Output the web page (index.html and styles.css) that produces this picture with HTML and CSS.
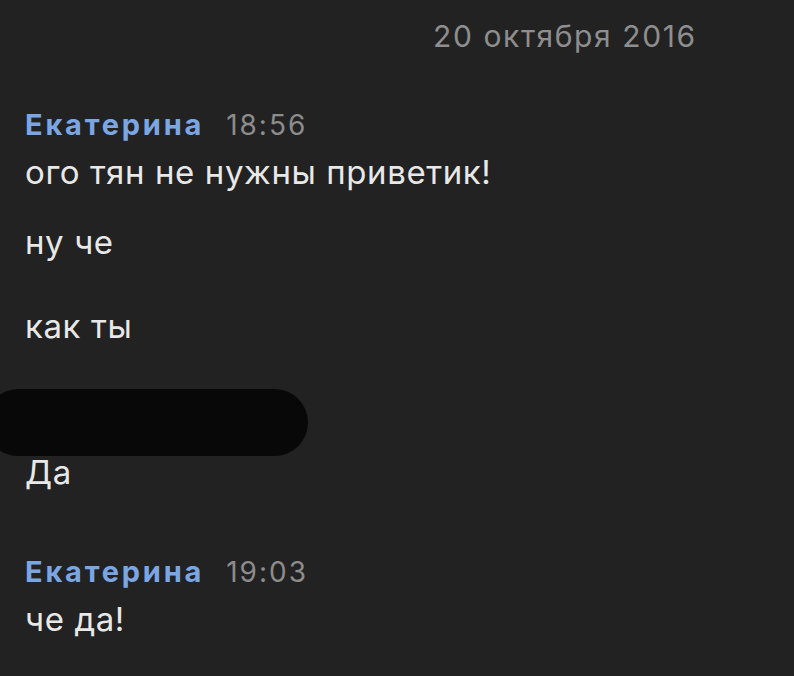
FILE: index.html
```html
<!DOCTYPE html>
<html lang="ru">
  <head>
    <meta charset="utf-8">
    <meta name="viewport" content="width=device-width, initial-scale=1.0">
    <title>Сообщения</title>
    <link rel="stylesheet" href="styles.css">
  </head>
  <body>
    <!-- история переписки -->
    <div class="history">
      <div class="day">20 октября 2016</div>

      <div class="group">
        <div class="head">
          <span class="author">Екатерина</span>
          <span class="time">18:56</span>
        </div>
        <div class="msg">ого тян не нужны приветик!</div>
        <div class="msg msg-gap">ну че</div>
        <div class="msg msg-gap-wide">как ты</div>
        <!-- закрашенное сообщение -->
        <div class="redacted"></div>
        <div class="msg msg-after-redact">Да</div>
      </div>

      <div class="group group-next">
        <div class="head">
          <span class="author">Екатерина</span>
          <span class="time">19:03</span>
        </div>
        <div class="msg">че да!</div>
      </div>
    </div>
  </body>
</html>
```

FILE: styles.css
```css
* {
  box-sizing: border-box;
}
html, body {
  margin: 0;
  padding: 0;
  background-color: #222222;
  color: #e8e8e8;
  font-family: Inter, "Liberation Sans", sans-serif;
}

.history {
  width: 794px;
  height: 676px;
  overflow: hidden;
}

/* дата дня */
.day {
  padding: 16px 0 0 433px;
  font-size: 30px;
  line-height: 40px;
  letter-spacing: 1.6px;
  color: #8e8e8e;
}

.group {
  margin-top: 49px;
  padding-left: 25px;
}
.group-next {
  margin-top: 60px;
}

.head {
  display: flex;
  align-items: baseline;
  gap: 22px;
  line-height: 40px;
}
.author {
  color: #7ba6e3;
  font-size: 29px;
  font-weight: 700;
  letter-spacing: 2.8px;
}
.time {
  color: #8c8c8c;
  font-size: 28px;
  letter-spacing: 2px;
}

.msg {
  font-size: 33px;
  line-height: 40px;
  letter-spacing: 0.6px;
  margin-top: 7px;
}
.msg-gap {
  margin-top: 30px;
}
.msg-gap-wide {
  margin-top: 44px;
}
.msg-after-redact {
  margin-top: -4px;
}

/* чёрная закраска поверх текста */
.redacted {
  margin: 43px 0 0 -40px;
  width: 323px;
  height: 67px;
  background-color: #080808;
  border-radius: 34px;
}
```
